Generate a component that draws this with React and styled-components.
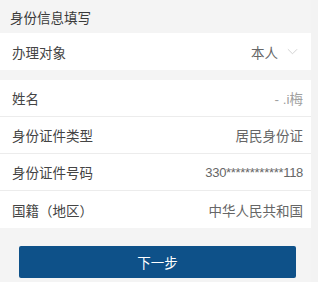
import React from 'react'
import styled, { createGlobalStyle } from 'styled-components'

const GlobalStyle = createGlobalStyle`
  html, body {
    margin: 0;
    padding: 0;
    background: #f3f3f3;
  }
  body {
    font-family: "Liberation Sans", "Noto Sans CJK SC", sans-serif;
  }
`

const rows = [
  { label: '姓名', value: '- .i梅', faint: true },
  { label: '身份证件类型', value: '居民身份证' },
  { label: '身份证件号码', value: '330************118', digits: true },
  { label: '国籍（地区）', value: '中华人民共和国' },
]

const App = () => {
  return (
    <>
      <GlobalStyle />
      <Page>
        <SectionTitle>身份信息填写</SectionTitle>

        <Group>
          <Row>
            <Label>办理对象</Label>
            <Value>
              本人
              <Chevron viewBox="0 0 12 7">
                <path d="M1 1 L6 6 L11 1" fill="none" stroke="#cfcfcf" strokeWidth="1" />
              </Chevron>
            </Value>
          </Row>
        </Group>

        <Spacer />

        <Group>
          {rows.map((r) => (
            <Row key={r.label}>
              <Label>{r.label}</Label>
              <Value $faint={r.faint} $digits={r.digits}>{r.value}</Value>
            </Row>
          ))}
        </Group>

        <Footer>
          <NextButton>下一步</NextButton>
        </Footer>
      </Page>
    </>
  )
}

const Page = styled.div`
  width: 311px;
  min-height: 282px;
  background: #f4f4f4;
`

const SectionTitle = styled.div`
  height: 33px;
  display: flex;
  align-items: center;
  padding-left: 10px;
  font-size: 13.5px;
  color: #3a3a3a;
`

const Group = styled.div`
  background: #fff;
`

const Row = styled.div`
  height: 37px;
  display: flex;
  align-items: center;
  justify-content: space-between;
  padding: 0 8px 0 12px;
  box-sizing: border-box;
  border-bottom: 1px solid #ececec;
  &:last-child {
    border-bottom: none;
  }
`

const Label = styled.span`
  font-size: 13.5px;
  color: #444;
`

const Value = styled.span`
  display: flex;
  align-items: center;
  gap: 9px;
  font-size: ${(p) => (p.$digits ? '13px' : '13.5px')};
  letter-spacing: ${(p) => (p.$digits ? '-0.3px' : '0')};
  color: ${(p) => (p.$faint ? '#a0a0a0' : '#666')};
`

const Chevron = styled.svg`
  width: 11px;
  height: 7px;
  margin-right: 5px;
`

const Spacer = styled.div`
  height: 10px;
`

const Footer = styled.div`
  padding: 18px 15px 4px 19px;
`

const NextButton = styled.button`
  width: 277px;
  height: 32px;
  border: none;
  border-radius: 2px;
  background: #0e5189;
  color: #fff;
  font-family: "Noto Sans CJK SC", sans-serif;
  font-size: 13.5px;
  cursor: pointer;
`

export default App
